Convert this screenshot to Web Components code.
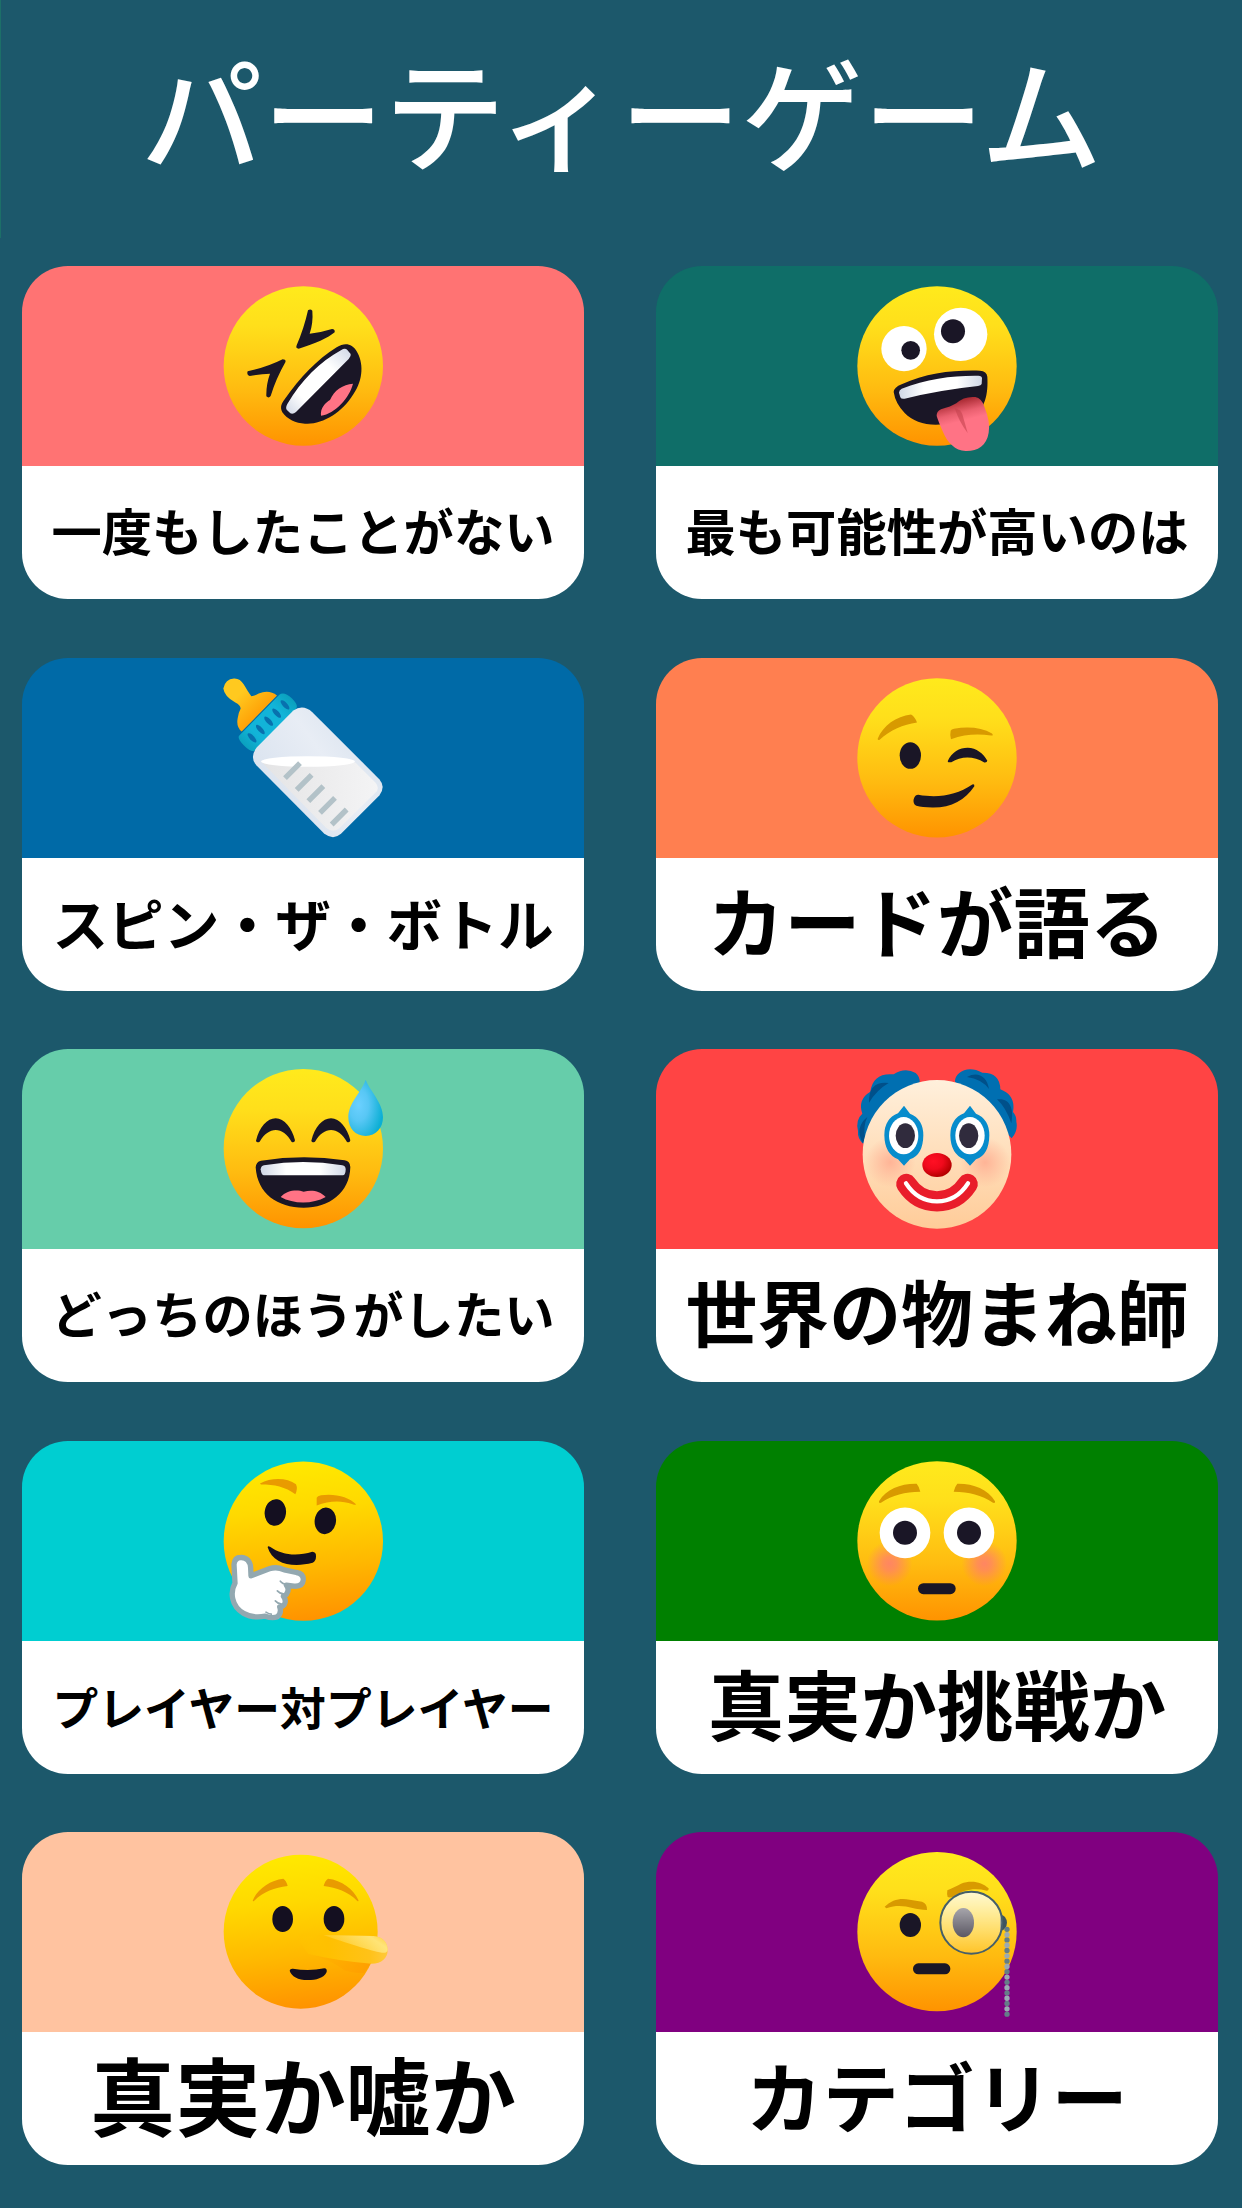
<!DOCTYPE html>
<html lang="ja">
<head>
<meta charset="utf-8">
<title>パーティーゲーム</title>
<style>
  body {
    margin: 0;
    background: #1c586b;
    font-family: "Noto Sans CJK JP", sans-serif;
  }
</style>
</head>
<body>
<party-app>
  <page-title slot="title">パーティーゲーム</page-title>
  <game-card color="#ff7373" size="50.3"><party-emoji slot="icon" name="rofl"></party-emoji>一度もしたことがない</game-card>
  <game-card color="#0f6e68" size="50.3"><party-emoji slot="icon" name="zany"></party-emoji>最も可能性が高いのは</game-card>
  <game-card color="#006aa7" size="55.7" lift="0.03"><party-emoji slot="icon" name="bottle"></party-emoji>スピン・ザ・ボトル</game-card>
  <game-card color="#ff7f50" size="76.4"><party-emoji slot="icon" name="wink"></party-emoji>カードが語る</game-card>
  <game-card color="#66cdaa" size="50.3"><party-emoji slot="icon" name="sweat"></party-emoji>どっちのほうがしたい</game-card>
  <game-card color="#ff4444" size="71.9"><party-emoji slot="icon" name="clown"></party-emoji>世界の物まね師</game-card>
  <game-card color="#00ced1" size="45.8" lift="0"><party-emoji slot="icon" name="thinking"></party-emoji>プレイヤー対プレイヤー</game-card>
  <game-card color="#008000" size="76.4"><party-emoji slot="icon" name="flushed"></party-emoji>真実か挑戦か</game-card>
  <game-card color="#ffc3a0" size="85.2"><party-emoji slot="icon" name="lying"></party-emoji>真実か嘘か</game-card>
  <game-card color="#800080" size="76.4"><party-emoji slot="icon" name="monocle"></party-emoji>カテゴリー</game-card>
</party-app>

<script>
const INK = '#1a1626';

const face = (cx, cy, r = 239, fill = 'face') => `<circle cx="${cx}" cy="${cy}" r="${r}" fill="url(#${fill})"/>`;

// each drawing has its own viewBox
const emojis = {
  rofl: {
    box: '-6 18 630 600',
    art: `
      ${face(310, 318)}
      <path fill="${INK}" d="M324 151Q331 145 337 152Q340 188 329 221Q362 218 396 207Q406 208 404 217C385 233 345 252 296 266Q286 266 290 256Q312 205 324 151Z"/>
      <path fill="${INK}" d="M143 334Q200 322 248 298Q259 298 256 307Q228 356 212 408Q206 416 199 409Q198 374 210 341Q182 342 149 348Q139 345 143 334Z"/>
      <path fill="${INK}" d="M410 262C436 245 457 253 469 272C491 306 491 358 460 403C425 460 365 495 315 491C287 490 262 478 247 457C239 441 245 430 254 418C300 352 352 298 410 262Z"/>
      <path fill="url(#teethDiag)" d="M424 270Q435 263 442 270L452 282Q454 289 446 297L288 456Q280 463 271 460L260 449Q256 443 262 432C303 362 360 305 424 270Z"/>
      <path fill="#ff7385" d="M459 371C449 412 405 462 363 467C360 444 377 428 390 420C402 391 429 373 459 371Z"/>`
  },
  zany: {
    box: '6 18 630 600',
    art: `
      ${face(321, 318)}
      <circle cx="222" cy="266" r="68" fill="#fff"/>
      <circle cx="392" cy="223" r="80" fill="#fff"/>
      <circle cx="242" cy="271" r="28" fill="${INK}"/>
      <circle cx="369" cy="214" r="36" fill="${INK}"/>
      <path fill="${INK}" d="M215 373C290 338 370 330 450 332Q470 333 472 350C475 400 466 450 425 470C340 505 265 502 224 459Q196 430 191 396Q192 382 215 373Z"/>
      <path fill="url(#teeth)" d="M215 386C290 356 370 346 445 347Q456 347 456 355L455 372Q453 377 444 378Q330 390 224 416Q214 418 211 412L207 398Q207 390 215 386Z"/>
      <path fill="url(#tongue)" d="M320 468Q319 455 333 448Q363 440 379 430Q402 408 436 411Q455 414 463 440Q482 486 476 518C470 558 441 574 407 573C376 572 352 548 339 516Q326 487 320 468Z"/>
      <path fill="#c5424f" opacity=".6" d="M374 444Q392 448 397 463L413 519Q388 487 374 444Z"/>`
  },
  bottle: {
    box: '-6 7.5 630 600',
    art: `
      <path fill="url(#teat)" d="M125 228Q108 214 113 188Q116 170 122 159Q121 149 106 141Q73 123 70 99Q76 70 102 69C129 68 134 97 154 122Q165 121 176 114Q207 101 231 120Z"/>
      <path fill="url(#cap)" d="M118 240L238 118Q252 107 276 129Q298 151 287 161L169 284Q155 294 132 270Q110 248 118 240Z"/>
      <g fill="#0871ae">
        <ellipse cx="255" cy="148" rx="7" ry="18" transform="rotate(-43 255 148)"/>
        <ellipse cx="230" cy="173" rx="7" ry="18" transform="rotate(-43 230 173)"/>
        <ellipse cx="206" cy="197" rx="7" ry="18" transform="rotate(-43 206 197)"/>
        <ellipse cx="181" cy="222" rx="7" ry="18" transform="rotate(-43 181 222)"/>
        <ellipse cx="156" cy="247" rx="7" ry="18" transform="rotate(-43 156 247)"/>
      </g>
      <path fill="url(#glass)" d="M170 276L280 165Q309 145 337 170L538 371Q558 394 538 420L423 535Q400 555 373 535L169 329Q148 305 170 276Z"/>
      <path fill="url(#milk)" d="M183 318Q325 300 466 321L526 381Q541 398 526 412L418 518Q398 534 378 517Z"/>
      <ellipse cx="324" cy="318" rx="141" ry="16" fill="#fff"/>
      <g stroke="#b3c2c8" stroke-width="16">
        <path d="M300 323L255 368M335 358L290 403M370 392L325 437M405 427L360 472M440 462L395 507"/>
      </g>`
  },
  wink: {
    box: '6 7.5 630 600',
    art: `
      ${face(321, 307)}
      <path fill="#d89a00" d="M143 250C159 210 199 182 243 177Q255 184 261 201C219 208 181 223 149 253Q143 255 143 250Z"/>
      <path fill="#d89a00" d="M362 226Q364 221 372 220C416 212 456 217 486 234Q492 241 483 240C443 234 404 236 363 251Q359 241 362 226Z"/>
      <ellipse cx="241" cy="300" rx="32" ry="40" fill="${INK}"/>
      <path fill="${INK}" d="M353 317C365 290 389 277 413 277C439 277 461 295 472 316Q471 322 463 321C432 301 393 301 364 320Q354 322 353 317Z"/>
      <path fill="${INK}" d="M265 418C326 429 379 419 427 387Q434 385 433 392C406 434 362 457 307 456Q276 456 259 451Q248 444 251 431Q255 418 265 418Z"/>`
  },
  sweat: {
    box: '-6 12 630 600',
    art: `
      ${face(310, 311)}
      <path fill="${INK}" d="M168 287C178 246 202 220 227 220C253 220 276 250 285 286Q284 294 275 291C249 243 206 243 179 290Q170 295 168 287Z"/>
      <path fill="${INK}" transform="translate(166 0)" d="M168 287C178 246 202 220 227 220C253 220 276 250 285 286Q284 294 275 291C249 243 206 243 179 290Q170 295 168 287Z"/>
      <path fill="${INK}" d="M183 347Q310 327 434 346Q450 348 451 366C449 444 387 488 311 488C233 488 172 447 167 367Q168 350 183 347Z"/>
      <path fill="url(#teeth)" d="M192 361Q310 341 427 361Q437 363 437 373Q437 391 428 391H192Q184 391 182 373Q183 363 192 361Z"/>
      <path fill="#ff7385" d="M242 456C260 435 291 433 311 440C335 434 359 437 377 456C339 478 280 478 242 456Z"/>
      <path fill="url(#drop)" d="M497 104C511 140 549 173 549 217C549 249 528 273 497 273C466 273 445 250 445 217C445 173 485 141 497 104Z"/>`
  },
  clown: {
    box: '6 12 630 600',
    art: `
      <path fill="#006fb1" d="M99 296Q82 280 84 258Q76 224 97 206Q82 163 121 140Q129 82 191 88Q225 65 257 84Q270 95 269 112L170 200Z"/>
      <path fill="#006fb1" d="M545 280Q565 256 559 230Q560 213 549 201Q558 151 511 133Q510 82 457 83C414 58 374 82 375 110L470 200Z"/>
      <path fill="#00508a" d="M117 173Q115 107 176 114Q141 134 117 173ZM98 294Q73 247 112 216Q99 242 105 281ZM411 96C442 78 471 93 477 132Q455 102 411 96ZM501 163C540 158 553 191 544 235Q528 188 501 163Z"/>
      <circle cx="321" cy="328" r="223" fill="url(#skin)"/>
      <circle cx="181" cy="352" r="75" fill="url(#clownBlush)"/>
      <circle cx="465" cy="352" r="75" fill="url(#clownBlush)"/>
      <path fill="#078ccc" d="M222 182L240 206Q280 222 280 271Q279 331 240 343L222 362L204 343Q164 327 163 271Q163 221 204 205Z"/>
      <ellipse cx="221" cy="272" rx="44" ry="56" fill="#fff"/>
      <ellipse cx="226" cy="272" rx="29" ry="37" fill="#302b3d"/>
      <path fill="#078ccc" d="M420 182L438 206Q478 222 478 271Q477 331 438 343L420 362L402 343Q362 327 361 271Q361 221 402 205Z"/>
      <ellipse cx="420" cy="272" rx="44" ry="56" fill="#fff"/>
      <ellipse cx="416" cy="272" rx="29" ry="37" fill="#302b3d"/>
      <ellipse cx="321" cy="360" rx="44" ry="36" fill="url(#nose)"/>
      <path fill="none" stroke="#e91d2b" stroke-width="61" stroke-linecap="round" d="M229 417Q263 469 321 469Q379 469 413 417"/>
      <path fill="none" stroke="#fff" stroke-width="13" stroke-linecap="round" d="M228 415Q263 469 321 469Q379 469 414 415"/>`
  },
  thinking: {
    box: '-6 10.5 630 600',
    art: `
      ${face(310, 311, 239, 'faceWarm')}
      <path fill="#e99b00" d="M180 138C215 119 262 121 288 140Q294 153 286 170C256 148 223 141 183 141Z"/>
      <path fill="#e99b00" d="M350 181Q352 175 363 173C405 167 447 178 468 200Q466 204 458 200C419 187 386 191 350 204Z"/>
      <ellipse cx="226" cy="225" rx="32" ry="40" fill="#140f20" transform="rotate(8 226 225)"/>
      <ellipse cx="376" cy="250" rx="32" ry="40" fill="#140f20" transform="rotate(8 376 250)"/>
      <path fill="#140f20" d="M210 328C246 354 292 357 337 343Q349 344 348 357Q348 370 338 376C277 391 218 380 203 329Q204 324 210 328Z"/>
      <path fill="#fff" stroke="#93a8b0" stroke-width="16" stroke-linejoin="round" d="M102 381Q104 360 122 360C140 359 151 372 152 391L153 415L208 394Q230 386 253 397L289 405Q310 407 310 427Q308 448 282 446L259 443Q268 454 262 465Q258 475 250 476Q260 489 253 501Q247 508 239 508Q246 526 232 538Q217 544 196 536C145 546 106 521 98 483Q93 458 105 437Z"/>
      <g fill="none" stroke="#93a8b0" stroke-width="5" stroke-linecap="round">
        <path d="M241 431Q247 439 262 441M232 460Q238 467 250 469M226 490Q234 499 243 499M198 524Q207 530 214 530"/>
      </g>`
  },
  flushed: {
    box: '6 10.5 630 600',
    art: `
      ${face(321, 310)}
      <path fill="#d89a00" d="M147 191C169 155 213 138 260 139Q267 147 271 163C224 164 188 173 153 196Q145 198 147 191Z"/>
      <path fill="#d89a00" d="M495 191C473 155 429 138 382 139Q375 147 371 163C418 164 454 173 489 196Q497 198 495 191Z"/>
      <circle cx="179" cy="378" r="68" fill="url(#blush)"/>
      <circle cx="463" cy="378" r="68" fill="url(#blush)"/>
      <circle cx="225" cy="286" r="76" fill="#fff"/>
      <circle cx="417" cy="286" r="76" fill="#fff"/>
      <circle cx="225" cy="286" r="36" fill="${INK}"/>
      <circle cx="417" cy="286" r="36" fill="${INK}"/>
      <rect x="264" y="437" width="113" height="33" rx="16" fill="${INK}"/>`
  },
  lying: {
    box: '-6 12 630 600',
    art: `
      ${face(302, 311, 231, 'faceWarm')}
      <path fill="#e99b00" d="M159 216C172 184 210 156 250 152Q259 158 263 174C223 180 192 189 162 219Q157 222 159 216Z"/>
      <path fill="#e99b00" d="M475 216C462 184 424 156 384 152Q375 158 371 174C411 180 442 189 472 219Q477 222 475 216Z"/>
      <ellipse cx="248" cy="273" rx="31" ry="39" fill="#140f20"/>
      <ellipse cx="402" cy="273" rx="31" ry="39" fill="#140f20"/>
      <path fill="url(#noseShade)" d="M330 379Q400 400 435 428Q470 436 493 435L514 404L500 390Z"/>
      <path fill="url(#longNose)" d="M290 331Q310 319 350 320L520 324C547 325 563 343 563 366C563 390 546 407 514 407Q420 400 325 378Z"/>
      <path fill="url(#noseGlow)" d="M370 321L520 324C547 325 563 343 563 366C562 372 556 376 546 374C510 368 440 345 370 321Z"/>
      <path fill="#140f20" d="M279 422Q326 430 373 421Q382 422 380 432C371 451 349 456 323 456C294 456 274 445 269 428Q270 421 279 422Z"/>`
  },
  monocle: {
    box: '6 12 630 600',
    art: `
      ${face(321, 311)}
      <path fill="#d89a00" d="M164 236C186 214 213 209 239 215L276 221Q292 226 291 246C246 246 220 223 169 241Z"/>
      <path fill="#d89a00" d="M352 187Q378 175 393 167C426 155 456 163 476 181Q477 189 470 188C436 179 401 184 377 203Q361 211 353 207Q350 200 352 187Z"/>
      <ellipse cx="241" cy="291" rx="32" ry="36" fill="${INK}"/>
      <path fill="#3d545e" d="M511 260Q529 262 531 284Q530 304 511 309Z"/>
      <ellipse cx="400" cy="284" rx="32" ry="44" fill="${INK}"/>
      <circle cx="424" cy="284" r="93" fill="url(#lens)" stroke="#465f69" stroke-width="6"/>
      <path fill="none" stroke="#647d88" stroke-width="16" stroke-linecap="round" stroke-dasharray="0 31.8" d="M531 304V560"/>
      <path fill="none" stroke="#9baab4" stroke-width="16" stroke-linecap="round" stroke-dasharray="0 31.8" d="M531 320V550"/>
      <rect x="249" y="406" width="112" height="33" rx="16" fill="${INK}"/>`
  }
};

const gradients = `
  <defs>
    <linearGradient id="face" x2="0" y2="1">
      <stop stop-color="#ffea1c"/><stop offset=".25" stop-color="#ffdf1b"/><stop offset=".65" stop-color="#ffbb10"/><stop offset="1" stop-color="#ff9300"/>
    </linearGradient>
    <linearGradient id="faceWarm" x1=".45" x2=".55" y2="1">
      <stop stop-color="#ffe900"/><stop offset=".3" stop-color="#ffd900"/><stop offset=".65" stop-color="#ffb900"/><stop offset="1" stop-color="#ff9200"/>
    </linearGradient>
    <linearGradient id="teeth">
      <stop stop-color="#d0d7e6"/><stop offset=".3" stop-color="#fff"/><stop offset=".7" stop-color="#fff"/><stop offset="1" stop-color="#d0d7e6"/>
    </linearGradient>
    <linearGradient id="teethDiag" x1="1" y1="0" x2="0" y2="1">
      <stop stop-color="#d0d7e6"/><stop offset=".3" stop-color="#fff"/><stop offset=".75" stop-color="#fff"/><stop offset="1" stop-color="#d0d7e6"/>
    </linearGradient>
    <linearGradient id="tongue" x1=".35" y1="0" x2=".6" y2="1">
      <stop offset=".03" stop-color="#9c1f26"/><stop offset=".3" stop-color="#ea6070"/><stop offset=".45" stop-color="#ff7385"/>
    </linearGradient>
    <linearGradient id="teat" x2="1" y2="1">
      <stop offset=".3" stop-color="#ffc91f"/><stop offset=".65" stop-color="#ffa308"/>
    </linearGradient>
    <linearGradient id="cap" x1="0" y1="1" x2="1" y2="0">
      <stop stop-color="#0798b2"/><stop offset=".3" stop-color="#12b4d8"/><stop offset=".7" stop-color="#12b4d8"/><stop offset="1" stop-color="#0798b2"/>
    </linearGradient>
    <linearGradient id="glass" x1="0" y1=".5" x2=".7" y2="0">
      <stop stop-color="#dae3ef"/><stop offset=".6" stop-color="#e8edf5"/><stop offset="1" stop-color="#dbe4ef"/>
    </linearGradient>
    <linearGradient id="milk"><stop stop-color="#e4e4e5"/><stop offset="1" stop-color="#f4f4f5"/></linearGradient>
    <radialGradient id="drop" cx=".3" cy=".45" r=".7">
      <stop stop-color="#6bd0ff"/><stop offset=".4" stop-color="#58c7f5"/><stop offset="1" stop-color="#0cafd4"/>
    </radialGradient>
    <linearGradient id="skin" x2="0" y2="1">
      <stop stop-color="#fff0dc"/><stop offset="1" stop-color="#ffcc99"/>
    </linearGradient>
    <radialGradient id="clownBlush">
      <stop stop-color="#ffad91" stop-opacity=".85"/><stop offset="1" stop-color="#ffad91" stop-opacity="0"/>
    </radialGradient>
    <radialGradient id="blush">
      <stop stop-color="#ff7c70" stop-opacity=".85"/><stop offset=".3" stop-color="#ff7c70" stop-opacity=".7"/><stop offset="1" stop-color="#ff7c70" stop-opacity="0"/>
    </radialGradient>
    <radialGradient id="nose" cx=".38" cy=".35" r=".65">
      <stop stop-color="#ff1024"/><stop offset=".5" stop-color="#f00a1c"/><stop offset="1" stop-color="#b50000"/>
    </radialGradient>
    <linearGradient id="longNose" x2="1">
      <stop stop-color="#ffc800" stop-opacity="0"/><stop offset=".35" stop-color="#ffc000"/><stop offset=".8" stop-color="#ffc218"/><stop offset="1" stop-color="#ffc93c"/>
    </linearGradient>
    <linearGradient id="noseGlow" x1="0" y1=".6" x2="1" y2=".2">
      <stop stop-color="#fff5a0" stop-opacity="0"/><stop offset=".8" stop-color="#ffee90" stop-opacity=".75"/><stop offset="1" stop-color="#ffe070" stop-opacity=".5"/>
    </linearGradient>
    <linearGradient id="noseShade" x2="1">
      <stop stop-color="#ffa600" stop-opacity="0"/><stop offset="1" stop-color="#ff9a00" stop-opacity=".75"/>
    </linearGradient>
    <linearGradient id="lens" x2="0" y2="1">
      <stop stop-color="#fff" stop-opacity=".8"/><stop offset="1" stop-color="#fff" stop-opacity=".1"/>
    </linearGradient>
  </defs>`;

class PartyEmoji extends HTMLElement {
  constructor() {
    super();
    this.attachShadow({ mode: 'open' });
  }

  connectedCallback() {
    const { box, art } = emojis[this.getAttribute('name')];
    this.shadowRoot.innerHTML = `
      <style>
        :host { display: block; width: 210px; height: 200px; }
        svg { display: block; width: 100%; height: 100%; }
      </style>
      <svg viewBox="${box}" aria-hidden="true">${gradients}${art}</svg>
    `;
  }
}
customElements.define('party-emoji', PartyEmoji);

class GameCard extends HTMLElement {
  constructor() {
    super();
    this.attachShadow({ mode: 'open' });
  }

  connectedCallback() {
    // how far the name sits above the middle, in em
    const lift = Number(this.getAttribute('lift') ?? 0.06);
    this.shadowRoot.innerHTML = `
      <style>
        :host {
          display: flex;
          flex-direction: column;
          height: 333px;
          border-radius: 46px;
          overflow: hidden;
        }
        .banner {
          display: flex;
          justify-content: center;
          height: 200px;
          flex: none;
          background: ${this.getAttribute('color')};
        }
        .name {
          flex: 1;
          display: flex;
          align-items: center;
          justify-content: center;
          box-sizing: border-box;
          padding-bottom: ${lift * 2}em;
          background: #fff;
          color: #000;
          font-size: ${this.getAttribute('size')}px;
          font-weight: 700;
          line-height: 1;
          white-space: nowrap;
        }
      </style>
      <div class="banner"><slot name="icon"></slot></div>
      <div class="name"><span><slot></slot></span></div>
    `;
  }
}
customElements.define('game-card', GameCard);

class PageTitle extends HTMLElement {
  constructor() {
    super();
    this.attachShadow({ mode: 'open' });
    this.shadowRoot.innerHTML = `
      <style>
        :host {
          display: block;
          box-sizing: border-box;
          height: 238px;
          padding-top: 49px;
          border-left: 1px solid #1c6f68;
        }
        h1 {
          margin: 0;
          color: #fff;
          font-size: 121.5px;
          font-weight: 500;
          line-height: 120px;
          text-align: center;
          white-space: nowrap;
        }
      </style>
      <h1><slot></slot></h1>
    `;
  }
}
customElements.define('page-title', PageTitle);

class PartyApp extends HTMLElement {
  constructor() {
    super();
    this.attachShadow({ mode: 'open' });
    this.shadowRoot.innerHTML = `
      <style>
        :host { display: block; height: 2208px; overflow: hidden; }
        .grid {
          display: grid;
          grid-template-columns: 562px 562px;
          gap: 58.5px 72px;
          padding: 28px 24px 0 22px;
        }
      </style>
      <slot name="title"></slot>
      <div class="grid"><slot></slot></div>
    `;
  }
}
customElements.define('party-app', PartyApp);
</script>
</body>
</html>
